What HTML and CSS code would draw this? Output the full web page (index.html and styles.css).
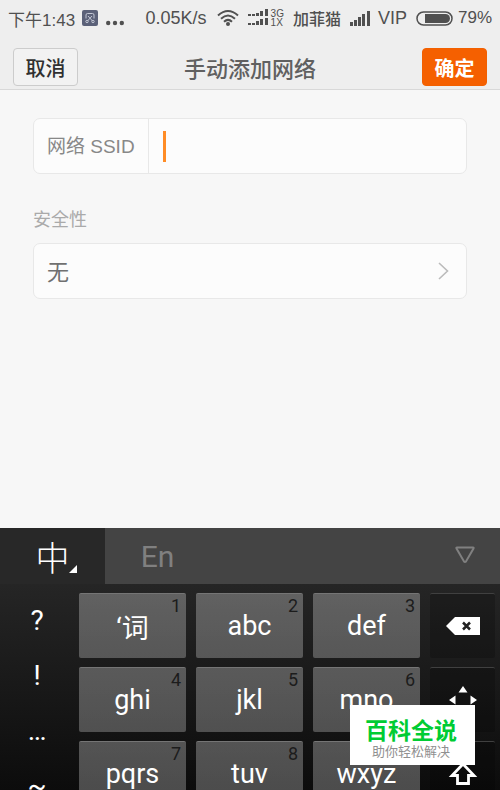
FILE: index.html
```
<!DOCTYPE html>
<html lang="zh-CN">
<head>
    <meta charset="UTF-8">
    <meta name="viewport" content="width=device-width, initial-scale=1.0">
    <title>手动添加网络</title>
    <link rel="stylesheet" href="styles.css">
</head>
<body>
    <div class="status-bar">
        <span class="time">下午1:43</span>
        <svg class="app-icon" width="16" height="16" viewBox="0 0 16 16">
            <rect width="16" height="16" rx="2" fill="#5b6178"/>
            <path d="M4 8.500V5q0-1.500 1.500-1.500h5q1.500 0 1.500 1.500v3.500M6 6l4.500 5M10 6l-4.500 5" fill="none" stroke="#c3c7d4"/>
            <circle cx="5" cy="11.500" r="1.200" fill="none" stroke="#c3c7d4"/>
            <circle cx="11" cy="11.500" r="1.200" fill="none" stroke="#c3c7d4"/>
        </svg>
        <svg class="dots" width="18" height="16" viewBox="0 0 18 16">
            <g fill="#505050"><circle cx="2.200" cy="13" r="2.200"/><circle cx="9" cy="13" r="2.200"/><circle cx="15.800" cy="13" r="2.200"/></g>
        </svg>
        <span class="speed">0.05K/s</span>
        <svg class="wifi" width="22" height="18" viewBox="0 0 22 18">
            <g fill="none" stroke="#505050" stroke-width="2">
                <path d="M1 6.500Q11-2.500 21 6.500"/>
                <path d="M4 9.700Q11 3.300 18 9.700"/>
                <path d="M7 12.700Q11 9 15 12.700"/>
            </g>
            <circle cx="11" cy="15" r="2" fill="#505050"/>
        </svg>
        <svg class="dual" width="20" height="18" viewBox="0 0 20 18">
            <g fill="#505050">
                <path d="M0 5h3v2H0zM4 5h3v2H4zM8 4h3v3H8zM12 2h3v5h-3zM17 0h3v7h-3z"/>
                <path d="M0 14h3v2H0zM4 14h3v2H4zM8 12h3v4H8zM12 10h3v6h-3zM17 9h3v7h-3z"/>
            </g>
        </svg>
        <span class="net-type"><span>3G</span><span>1X</span></span>
        <span class="carrier">加菲猫</span>
        <svg class="signal" width="20" height="16" viewBox="0 0 20 16">
            <path d="M0 12h3v4H0zM4 10h3v6H4zM8 7h3v9H8zM12 4h3v12h-3zM17 1h3v15h-3z" fill="#505050"/>
        </svg>
        <span class="vip">VIP</span>
        <svg class="battery" width="37" height="15" viewBox="0 0 37 15">
            <rect x="1" y="1" width="35" height="13" rx="6.500" fill="none" stroke="#505050" stroke-width="1.500"/>
            <path d="M9 3h20.500a4.500 4.500 0 0 1 0 9H9z" fill="#505050"/>
        </svg>
        <span class="percent">79%</span>
    </div>
    <header class="title-bar">
        <button class="btn">取消</button>
        <h1>手动添加网络</h1>
        <button class="btn btn-ok">确定</button>
    </header>
    <main class="form">
        <div class="field">
            <label for="ssid">网络 SSID</label>
            <span class="caret"></span>
            <input id="ssid" type="text" autocomplete="off">
        </div>
        <label class="caption" for="security">安全性</label>
        <div class="field">
            <select id="security">
                <option>无</option>
                <option>WEP</option>
                <option>WPA/WPA2 PSK</option>
            </select>
            <svg class="chevron" width="11" height="18" viewBox="0 0 11 18">
                <path d="M1 1l8.500 8L1 17" fill="none" stroke="#bbb" stroke-width="1.600"/>
            </svg>
        </div>
    </main>
    <section class="keyboard">
        <div class="tabs">
            <button class="tab active">中
                <svg class="corner" width="8" height="8" viewBox="0 0 8 8"><path d="M8 0v8H0z" fill="#fff"/></svg>
            </button>
            <button class="tab">En</button>
            <button class="hide" aria-label="收起键盘">
                <svg width="20" height="18" viewBox="0 0 20 18">
                    <path d="M2 1.500h16q1 0 .5 1L11 15.500q-1 1-2 0L1.500 2.500q-.5-1 .5-1z" fill="none" stroke="#808080" stroke-width="2"/>
                </svg>
            </button>
        </div>
        <div class="keys">
            <div class="symbols">
                <button>?</button>
                <button>!</button>
                <button>…</button>
                <button>~</button>
            </div>
            <div class="grid">
                <button class="key">‘词<sup>1</sup></button>
                <button class="key">abc<sup>2</sup></button>
                <button class="key">def<sup>3</sup></button>
                <button class="key dark" aria-label="删除">
                    <svg width="34" height="18" viewBox="0 0 34 18">
                        <path d="M0 9l9-9h25v18H9z" fill="#fff"/>
                        <path d="M17 5.500l7 7M24 5.500l-7 7" stroke="#222" stroke-width="2.500"/>
                    </svg>
                </button>
                <button class="key">ghi<sup>4</sup></button>
                <button class="key">jkl<sup>5</sup></button>
                <button class="key">mno<sup>6</sup></button>
                <button class="key dark" aria-label="移动光标">
                    <svg width="28" height="28" viewBox="0 0 28 28">
                        <path d="M14 0l4.500 6.500h-9zM14 28l4.500-6.500h-9zM0 14l6.500-4.500v9zM28 14l-6.500-4.500v9z" fill="#fff"/>
                    </svg>
                </button>
                <button class="key">pqrs<sup>7</sup></button>
                <button class="key">tuv<sup>8</sup></button>
                <button class="key">wxyz<sup>9</sup></button>
                <button class="key dark" aria-label="大写">
                    <svg width="30" height="24" viewBox="0 0 30 24">
                        <path d="M15 2L4 13.500h5.500v8h11v-8H26z" fill="none" stroke="#fff" stroke-width="2.800"/>
                    </svg>
                </button>
            </div>
        </div>
    </section>
    <aside class="badge">
        <strong>百科全说</strong>
        <span>助你轻松解决</span>
    </aside>
</body>
</html>
```
FILE: styles.css
```
* {
    box-sizing: border-box;
}
body {
    margin: 0;
    height: 100vh;
    display: flex;
    flex-direction: column;
    overflow: hidden;
    background-color: #f7f7f7;
    color: #505050;
    font-family: "Liberation Sans", "Noto Sans CJK SC", sans-serif;
}
button, input, select {
    font-family: inherit;
    border: none;
    margin: 0;
    padding: 0;
    background: none;
    cursor: pointer;
}
svg {
    flex: none;
}
.status-bar {
    display: flex;
    align-items: center;
    height: 36px;
    padding: 0 8px;
    background-color: #eee;
    font-size: 18px;
    white-space: nowrap;
}
.time, .percent {
    font-size: 17px;
}
.app-icon {
    margin-left: 7px;
}
.dots {
    margin-left: 8px;
}
.speed {
    margin-left: auto;
}
.wifi {
    margin-left: 10px;
}
.dual {
    margin-left: 9px;
}
.net-type {
    display: flex;
    flex-direction: column;
    margin-left: 3px;
    font-size: 10px;
    line-height: 9px;
}
.carrier {
    margin-left: 9px;
    font-size: 16px;
    font-weight: 500;
}
.signal {
    margin-left: 9px;
}
.vip {
    margin-left: 8px;
}
.battery {
    margin-left: 9px;
    margin-right: 5px;
}
.title-bar {
    display: flex;
    align-items: center;
    justify-content: space-between;
    padding: 12px 13px 3px;
    background-color: #eee;
    border-bottom: 1px solid #d8d8d8;
}
.title-bar h1 {
    margin: 0;
    font-size: 22px;
    font-weight: 500;
    color: #606060;
}
.btn {
    width: 65px;
    height: 38px;
    border: 1px solid #ccc;
    border-radius: 4px;
    background-color: #f2f2f2;
    color: #303030;
    font-size: 20px;
    font-weight: 500;
}
.btn-ok {
    border-color: #f26000;
    background-color: #f56000;
    color: #fff;
    font-weight: bold;
}
.form {
    flex: 1;
    padding: 28px 33px 0;
}
.field {
    display: flex;
    align-items: center;
    height: 56px;
    border: 1px solid #e8e8e8;
    border-radius: 7px;
    background-color: #fcfcfc;
}
.field label {
    padding: 2px 13px 0;
    border-right: 1px solid #e8e8e8;
    line-height: 52px;
    font-size: 19px;
    color: #888;
}
.caret {
    width: 3px;
    height: 31px;
    margin-left: 14px;
    background-color: #ff8c26;
}
.field input {
    flex: 1;
    min-width: 0;
    height: 54px;
    font-size: 20px;
    outline: none;
}
.caption {
    display: block;
    padding-top: 33px;
    margin-bottom: 9px;
    line-height: 27px;
    font-size: 18px;
    color: #aaa;
}
.field select {
    flex: 1;
    height: 54px;
    padding: 2px 0 0 13px;
    appearance: none;
    font-size: 22px;
    color: #707070;
}
.chevron {
    margin-right: 17px;
}
.keyboard {
    margin-bottom: -33px;
    background-image: linear-gradient(#2c2c2c, #080808);
    font-family: Roboto, "Noto Sans CJK SC", sans-serif;
}
.tabs {
    display: flex;
    height: 56px;
    background-color: #444;
}
.tab {
    width: 105px;
    font-family: inherit;
    font-size: 30px;
    color: #808080;
}
.tab.active {
    position: relative;
    background-color: #282828;
    color: #fff;
    font-size: 34px;
    font-weight: 300;
}
.corner {
    position: absolute;
    right: 28px;
    bottom: 11px;
}
.hide {
    margin-left: auto;
    padding: 0 25px;
}
.keys {
    display: flex;
    padding: 9px 5px 10px 0;
}
.symbols {
    display: flex;
    flex-direction: column;
    width: 79px;
    padding-right: 5px;
}
.symbols button {
    height: 55px;
    color: #fff;
    font-size: 28px;
}
.grid {
    flex: 1;
    display: grid;
    grid-template-columns: 107fr 107fr 107fr 65fr;
    grid-auto-rows: 65px;
    gap: 9px 10px;
}
.key {
    position: relative;
    border-top: 1px solid #757575;
    border-radius: 2px;
    background-image: linear-gradient(rgba(255, 255, 255, 0.28), rgba(255, 255, 255, 0.26));
    color: #fff;
    font-size: 27px;
}
.key sup {
    position: absolute;
    top: 2px;
    right: 5px;
    line-height: 20px;
    font-size: 18px;
    color: #1c1c1c;
}
.key.dark {
    display: flex;
    align-items: center;
    justify-content: center;
    border-top-color: #404040;
    background-image: none;
    background-color: rgba(0, 0, 0, 0.2);
}
.badge {
    position: absolute;
    right: 25px;
    bottom: 25px;
    display: flex;
    flex-direction: column;
    align-items: center;
    min-width: 125px;
    padding: 10px 18px 6px 15px;
    background-color: #fff;
    font-family: "Noto Sans CJK SC", sans-serif;
}
.badge strong {
    line-height: 28px;
    font-size: 23px;
    color: #0c3;
}
.badge span {
    line-height: 16px;
    font-size: 13px;
    color: #909090;
}
```
